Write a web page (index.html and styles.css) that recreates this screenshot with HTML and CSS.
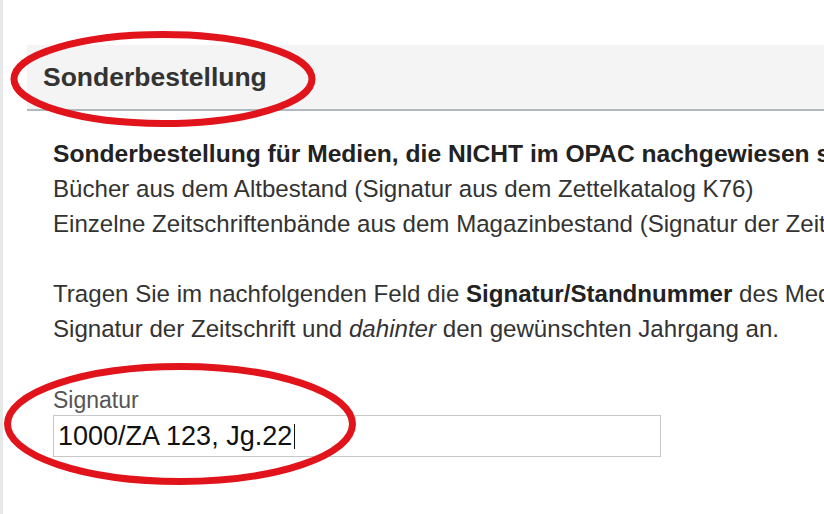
FILE: index.html
```html
<!DOCTYPE html>
<html lang="de">
<head>
<meta charset="utf-8">
<title>Sonderbestellung</title>
<link rel="stylesheet" href="styles.css">
</head>
<body>
<div class="page">
  <section class="order">
    <h2 class="order-title">Sonderbestellung</h2>
    <div class="order-body">
      <p class="intro"><strong class="lead">Sonderbestellung für Medien, die NICHT im OPAC nachgewiesen sind:</strong><br>
      Bücher aus dem Altbestand (Signatur aus dem Zettelkatalog K76)<br>
      Einzelne Zeitschriftenbände aus dem Magazinbestand (Signatur der Zeitschrift aus dem Zeitschriftenverzeichnis)</p>
      <p class="intro">Tragen Sie im nachfolgenden Feld die <strong>Signatur/Standnummer</strong> des Mediums ein. Bei Zeitschriften geben Sie bitte die<br>
      Signatur der Zeitschrift und <em>dahinter</em> den gewünschten Jahrgang an.</p>
      <div class="field">
        <label class="field-label">Signatur</label>
        <div class="field-input" role="textbox">1000/ZA 123, Jg.22<span class="caret"></span></div>
      </div>
    </div>
  </section>

  <!-- hand-drawn highlight rings -->
  <svg class="ring ring-title" width="312" height="104" viewBox="0 0 312 104">
    <ellipse cx="156" cy="52" rx="149" ry="44.5" />
  </svg>
  <svg class="ring ring-field" width="358" height="128" viewBox="0 0 358 128">
    <ellipse cx="179" cy="64" rx="172.5" ry="57.5" />
  </svg>
</div>
</body>
</html>
```

FILE: styles.css
```css
html, body {
  margin: 0;
  padding: 0;
  background: #fff;
}

body {
  width: 824px;
  height: 514px;
  overflow: hidden;
  font-family: "Liberation Sans", Arial, sans-serif;
  color: #333;
}

.page {
  position: relative;
  height: 514px;
  border-left: 3px solid #e8e8e8;
  padding: 45px 0 0 24px;
  box-sizing: border-box;
}

.order-title {
  margin: 0;
  padding-left: 16px;
  height: 64px;
  line-height: 64px;
  font-size: 26.5px;
  font-weight: bold;
  color: #333;
  background: #f4f4f5;
  border-bottom: 2px solid #b0b8c0;
  white-space: nowrap;
}

.order-body {
  padding: 25px 0 0 26px;
  white-space: nowrap;
}

.intro {
  margin: 0 0 35px;
  font-size: 24.1px;
  line-height: 35px;
  color: #333;
}

.intro strong {
  color: #222;
}

.intro .lead {
  font-size: 24.6px;
}

.field {
  display: flex;
  flex-direction: column;
  margin-top: 40px;
}

.field-label {
  font-size: 23px;
  line-height: 28px;
  color: #555;
}

.field-input {
  display: flex;
  align-items: center;
  width: 608px;
  height: 42px;
  margin-top: 1px;
  padding-left: 4px;
  box-sizing: border-box;
  border: 1px solid #c8c8c8;
  font-size: 27px;
  color: #111;
}

.caret {
  display: inline-block;
  width: 1px;
  height: 25px;
  margin-left: 2px;
  background: #111;
}

.ring {
  position: absolute;
  overflow: visible;
}

.ring ellipse {
  fill: none;
  stroke: #e1141c;
  stroke-width: 7;
}

.ring-title {
  left: 4px;
  top: 27px;
}

.ring-field {
  left: -2px;
  top: 360px;
}
```
